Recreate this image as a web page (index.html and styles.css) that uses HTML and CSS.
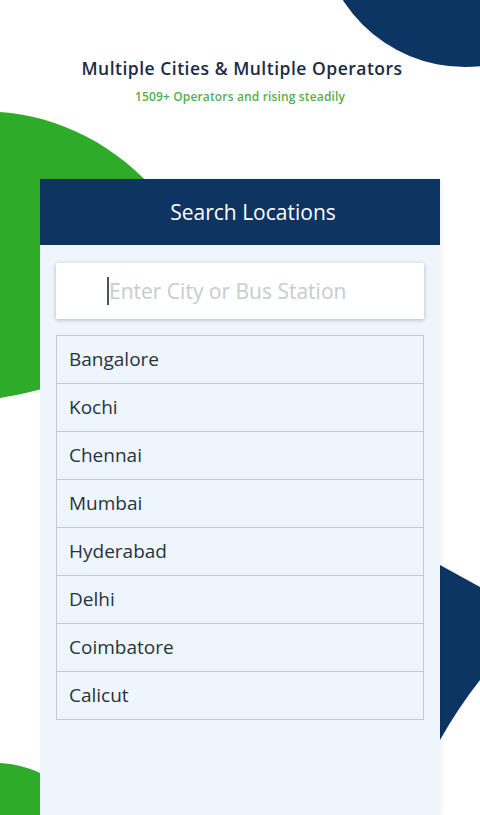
FILE: index.html
```html
<!DOCTYPE html>
<html lang="en">
<head>
    <meta charset="UTF-8">
    <meta name="viewport" content="width=device-width, initial-scale=1.0">
    <title>Search Locations</title>
    <link rel="stylesheet" href="styles.css">
</head>
<body>
    <div class="page">
        <!-- Decorative shapes behind the content -->
        <svg class="backdrop" width="480" height="815" viewBox="0 0 480 815" aria-hidden="true">
            <circle cx="465" cy="-78" r="145" fill="#0d3563"/>
            <path d="M0,112 C60,116 118,146 160,196 L160,360 C110,368 50,390 0,398 Z" fill="#2fab2a"/>
            <path d="M0,763 C16,764 32,768 46,776 L46,815 L0,815 Z" fill="#2fab2a"/>
            <path d="M440,565 L480,587 L480,680 Q458,708 440,740 Z" fill="#0d3563"/>
        </svg>

        <div class="intro">
            <h1>Multiple Cities &amp; Multiple Operators</h1>
            <p>1509+ Operators and rising steadily</p>
        </div>

        <div class="search-card">
            <div class="search-header">Search Locations</div>
            <div class="search-body">
                <label class="search-box">
                    <span class="caret"></span>
                    <input type="text" placeholder="Enter City or Bus Station">
                </label>

                <ul class="city-list">
                    <li>Bangalore</li>
                    <li>Kochi</li>
                    <li>Chennai</li>
                    <li>Mumbai</li>
                    <li>Hyderabad</li>
                    <li>Delhi</li>
                    <li>Coimbatore</li>
                    <li>Calicut</li>
                </ul>
            </div>
        </div>
    </div>
</body>
</html>
```

FILE: styles.css
```css
/* Search locations screen */
body {
    margin: 0;
    background: #ffffff;
    font-family: "Open Sans", "Noto Sans", sans-serif;
}

.page {
    position: relative;
    width: 480px;
    height: 815px;
    overflow: hidden;
}

.backdrop {
    position: absolute;
    left: 0;
    top: 0;
    z-index: 0;
}

.intro {
    position: relative;
    z-index: 1;
    padding-top: 57px;
    text-align: center;
}

.intro h1 {
    margin: 0;
    padding-left: 4px;
    font-size: 17.5px;
    line-height: 22px;
    font-weight: 600;
    color: #1c2b45;
    letter-spacing: 0.5px;
}

.intro p {
    margin: 10px 0 0;
    font-size: 12px;
    line-height: 16px;
    font-weight: 600;
    color: #52b04b;
    letter-spacing: 0.15px;
}

.search-card {
    position: relative;
    z-index: 1;
    margin: 74px 40px 0;
    min-height: 636px;
    background: #eef5fd;
    box-shadow: 2px 0 4px rgba(0, 0, 0, 0.06);
}

.search-header {
    height: 66px;
    line-height: 66px;
    padding-left: 26px;
    text-align: center;
    background: #0e3461;
    color: #ffffff;
    font-size: 21px;
}

.search-body {
    padding: 18px 16px;
}

.search-box {
    display: flex;
    align-items: center;
    height: 56px;
    padding-left: 51px;
    background: #ffffff;
    border-radius: 2px;
    box-shadow: 0 1px 4px rgba(0, 0, 0, 0.25);
}

.caret {
    width: 2px;
    height: 28px;
    background: #4a5560;
}

.search-box input {
    flex: 1;
    border: none;
    outline: none;
    background: transparent;
    padding: 0;
    font-family: inherit;
    font-size: 21px;
    color: #333;
}

.search-box input::placeholder {
    color: #c7cbd0;
}

.city-list {
    list-style: none;
    margin: 16px 0 0;
    padding: 0;
    border-bottom: 1px solid #c3cad6;
}

.city-list li {
    height: 47px;
    line-height: 47px;
    padding-left: 12px;
    border: 1px solid #c3cad6;
    border-bottom: none;
    font-size: 19px;
    color: #27333f;
}
```
